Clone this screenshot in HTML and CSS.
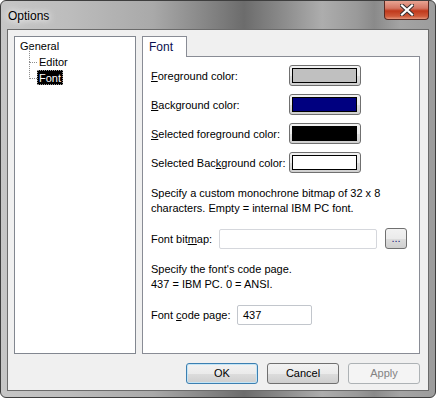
FILE: index.html
```html
<!DOCTYPE html>
<html lang="en">
<head>
    <meta charset="UTF-8">
    <title>Options</title>
    <link rel="stylesheet" href="styles.css">
</head>
<body>
    <div class="window">
        <div class="titlebar">
            <span class="title">Options</span>
            <div class="close">
                <svg width="14" height="12" viewBox="0 0 14 12">
                    <path d="M2 1.5 L12 10.5 M12 1.5 L2 10.5" stroke="#3a3030" stroke-width="4.2" stroke-linecap="square" fill="none"/>
                    <path d="M2 1.5 L12 10.5 M12 1.5 L2 10.5" stroke="#fff" stroke-width="2.2" stroke-linecap="square" fill="none"/>
                </svg>
            </div>
        </div>

        <div class="client">
            <div class="main">
                <!-- category tree -->
                <div class="tree">
                    <div class="node">General</div>
                    <div class="children">
                        <div class="node child">Editor</div>
                        <div class="node child last"><span class="selected">Font</span></div>
                    </div>
                </div>

                <!-- tab control -->
                <div class="tabs">
                    <div class="tab-strip">
                        <div class="tab">Font</div>
                    </div>
                    <div class="tab-page">
                        <div class="color-rows">
                            <div class="row">
                                <span class="label"><u>F</u>oreground color:</span>
                                <div class="swatch"><span class="fill" style="background:#c0c0c0"></span></div>
                            </div>
                            <div class="row">
                                <span class="label"><u>B</u>ackground color:</span>
                                <div class="swatch"><span class="fill" style="background:#000080"></span></div>
                            </div>
                            <div class="row">
                                <span class="label"><u>S</u>elected foreground color:</span>
                                <div class="swatch"><span class="fill" style="background:#000000"></span></div>
                            </div>
                            <div class="row">
                                <span class="label">Selected Bac<u>k</u>ground color:</span>
                                <div class="swatch"><span class="fill" style="background:#ffffff"></span></div>
                            </div>
                        </div>

                        <p class="note">Specify a custom monochrone bitmap of 32 x 8<br>characters. Empty = internal IBM PC font.</p>

                        <div class="row">
                            <span class="label label-bitmap">Font bit<u>m</u>ap:</span>
                            <div class="textbox textbox-bitmap"></div>
                            <div class="browse">...</div>
                        </div>

                        <p class="note">Specify the font's code page.<br>437 = IBM PC. 0 = ANSI.</p>

                        <div class="row">
                            <span class="label label-codepage">Font <u>c</u>ode page:</span>
                            <div class="textbox textbox-codepage">437</div>
                        </div>
                    </div>
                </div>
            </div>

            <div class="buttons">
                <div class="btn default">OK</div>
                <div class="btn">Cancel</div>
                <div class="btn disabled">Apply</div>
            </div>
        </div>
    </div>
</body>
</html>
```

FILE: styles.css
```css
body {
    margin: 0;
    font-family: "Liberation Sans", Arial, sans-serif;
    font-size: 11px;
    color: #000;
    background: #fff;
}

.window {
    width: 436px;
    height: 398px;
    box-sizing: border-box;
    border: 1px solid #3e3e3e;
    border-radius: 6px;
    overflow: hidden;
    display: flex;
    flex-direction: column;
    background: linear-gradient(90deg, #c6c6c6 0%, #bdbdbd 15%, #a9a9a9 35%, #7e7e7e 50%, #6c6c6c 56%, #8f8f8f 66%, #adadad 74%, #9a9a9a 82%, #8a8a8a 86%, #a4a4a4 92%, #9c9c9c 100%);
}

.titlebar {
    height: 28px;
    display: flex;
    justify-content: space-between;
    align-items: flex-start;
    flex-shrink: 0;
}

.title {
    font-size: 12px;
    padding: 8px 0 0 7px;
    text-shadow: 0 0 6px #fff, 0 0 10px #fff;
}

.close {
    width: 45px;
    height: 19px;
    margin-right: 6px;
    box-sizing: border-box;
    border: 1px solid #5a2a22;
    border-top: none;
    border-radius: 0 0 4px 4px;
    background: linear-gradient(180deg, #e8a493 0%, #d47663 40%, #c0391c 55%, #cf5a3a 85%, #e3967c 100%);
    display: flex;
    align-items: center;
    justify-content: center;
}

.close svg {
    display: block;
}

.client {
    margin: 0 6px;
    height: 362px;
    box-sizing: border-box;
    border: 1px solid #6b6b6b;
    background: #f0f0f0;
    padding: 6px 8px 0 6px;
}

.main {
    display: flex;
    gap: 6px;
    height: 318px;
}

/* tree */
.tree {
    width: 122px;
    box-sizing: border-box;
    border: 1px solid #828790;
    background: #fff;
    padding: 1px 0 0 5px;
}

.node {
    height: 16px;
    line-height: 16px;
}

.children {
    margin-left: 9px;
}

.child {
    position: relative;
    padding-left: 10px;
}

.child::before {
    content: "";
    position: absolute;
    left: 0;
    top: -8px;
    height: 16px;
    border-left: 1px dotted #8c8c8c;
}

.child::after {
    content: "";
    position: absolute;
    left: 0;
    top: 8px;
    width: 8px;
    border-top: 1px dotted #8c8c8c;
}

.child.last::before {
    height: 17px;
}

.selected {
    display: inline-block;
    margin-left: -2px;
    padding: 0 1px;
    height: 15px;
    line-height: 14px;
    box-sizing: border-box;
    background: #000;
    color: #fff;
    border: 1px dotted #9a9a9a;
}

/* tab control */
.tabs {
    width: 278px;
    display: flex;
    flex-direction: column;
}

.tab-strip {
    display: flex;
    height: 20px;
}

.tab {
    position: relative;
    z-index: 1;
    width: 45px;
    height: 21px;
    box-sizing: border-box;
    border: 1px solid #898c95;
    border-bottom: none;
    background: #fff;
    padding: 3px 0 0 6px;
    color: #0a1050;
    font-size: 12px;
}

.tab-page {
    flex: 1;
    border: 1px solid #898c95;
    background: #fff;
    padding: 8px 12px 0 8px;
}

.color-rows {
    display: flex;
    flex-direction: column;
    gap: 8px;
}

.row {
    display: flex;
    align-items: center;
    height: 21px;
}

.label {
    width: 138px;
    flex-shrink: 0;
}

.label-bitmap {
    width: 68px;
}

.label-codepage {
    width: 86px;
}

.swatch {
    width: 72px;
    height: 21px;
    box-sizing: border-box;
    border: 1px solid #707070;
    border-radius: 3px;
    background: linear-gradient(180deg, #f2f2f2 0%, #ebebeb 50%, #dddddd 51%, #cfcfcf 100%);
    padding: 2px 3px 2px 2px;
    display: flex;
}

.fill {
    flex: 1;
    border: 1px solid #000;
}

.note {
    margin: 13px 0 12px;
    line-height: 15px;
}

.textbox {
    height: 20px;
    box-sizing: border-box;
    border: 1px solid #c9ccd2;
    border-radius: 2px;
    background: #fff;
    line-height: 18px;
    padding-left: 5px;
}

.textbox-bitmap {
    width: 158px;
    border-color: #d5d7dc;
}

.textbox-codepage {
    width: 75px;
    border-color: #c2c6cc;
}

.browse {
    width: 22px;
    height: 21px;
    margin-left: 8px;
    box-sizing: border-box;
    border: 1px solid #707070;
    border-radius: 3px;
    background: linear-gradient(180deg, #f2f2f2 0%, #ebebeb 50%, #dddddd 51%, #cfcfcf 100%);
    color: #1a1a7a;
    text-align: center;
    line-height: 19px;
    letter-spacing: 0;
}

/* dialog buttons */
.buttons {
    display: flex;
    justify-content: flex-end;
    gap: 9px;
    margin-top: 9px;
}

.btn {
    width: 72px;
    height: 21px;
    box-sizing: border-box;
    border: 1px solid #707070;
    border-radius: 3px;
    background: linear-gradient(180deg, #f2f2f2 0%, #ebebeb 50%, #dddddd 51%, #cfcfcf 100%);
    text-align: center;
    line-height: 19px;
}

.btn.default {
    border-color: #3c7fb1;
    box-shadow: inset 0 0 0 1px #c4e5f6;
}

.btn.disabled {
    border-color: #adb2b5;
    background: #f4f4f4;
    color: #838383;
}
```
